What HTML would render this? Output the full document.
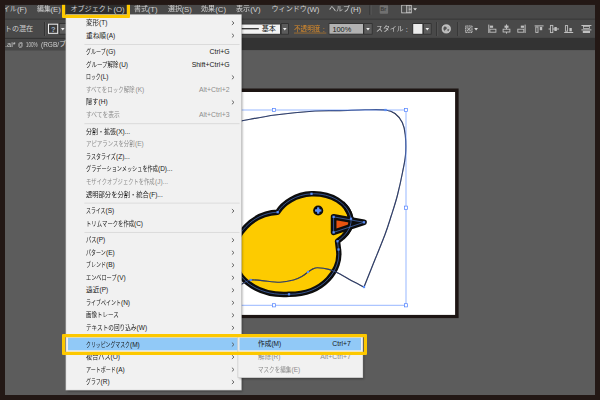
<!DOCTYPE html>
<html lang="ja"><head><meta charset="utf-8"><title>Illustrator</title>
<style>
html,body{margin:0;padding:0}
body{width:600px;height:400px;overflow:hidden;background:#231815;font-family:"Liberation Sans","Noto Sans CJK JP",sans-serif;position:relative}
.a{position:absolute}
svg{display:block;overflow:visible}
svg.L{position:absolute;left:0;top:0}
.x{position:absolute;white-space:nowrap}
.j{font-family:"Liberation Sans","Noto Sans CJK JP",sans-serif;transform-origin:0 50%}
</style></head><body>
<svg class="L" width="600" height="400" viewBox="0 0 600 400"><defs><clipPath id="hc"><rect x="344" y="196" width="20" height="44"/></clipPath></defs><rect x="5" y="4.8" width="590" height="390.2" fill="#5c5c5c"/><rect x="5" y="4.8" width="590" height="14.2" fill="#494949"/><rect x="5" y="18.7" width="590" height="1.1" fill="#343434"/><rect x="5" y="19.8" width="590" height="17.9" fill="#494949"/><rect x="5" y="37.7" width="590" height="12.4" fill="#333"/><rect x="5" y="38.9" width="150" height="11.4" fill="#484848"/><rect x="65" y="4.5" width="61.8" height="10.2" fill="#2f2f2f"/><rect x="369.5" y="5.3" width="1" height="9.5" fill="#2e2e2e"/><rect x="370.5" y="5.3" width="1" height="9.5" fill="#5a5a5a"/><rect x="379.7" y="5.3" width="8.4" height="8.4" fill="#707070" rx="0.8"/><g transform="translate(401.3 4.7)"><rect x="0.5" y="0.5" width="9.4" height="7.6" fill="#3a3a3a" stroke="#d0d0d0"/><rect x="1" y="1" width="4" height="6.6" fill="#4a4a4a"/><rect x="5" y="0.5" width="1" height="7.6" fill="#d0d0d0"/><rect x="7.4" y="0.5" width="0.8" height="7.6" fill="#d0d0d0"/><rect x="7.4" y="4" width="2.6" height="0.8" fill="#d0d0d0"/></g><path d="M413.2 8.2h3.8l-1.9 2.4z" fill="#d8d8d8"/><rect x="44" y="22" width="1" height="14" fill="#333"/><rect x="45" y="22" width="1" height="14" fill="#565656"/><rect x="48" y="23.7" width="10.2" height="10.1" fill="#f0f0f0"/><rect x="49" y="24.7" width="8.2" height="8.1" fill="#3a3a3a"/><rect x="58.9" y="23.3" width="7.8" height="11.2" fill="#2c2c2c"/><rect x="59.6" y="24" width="6.4" height="9.8" fill="#5b5b5b"/><path d="M61 28h3.6l-1.8 2.4z" fill="#f0f0f0"/><rect x="199.3" y="23.8" width="81.4" height="10.7" fill="#2c2c2c"/><rect x="200" y="24.5" width="80" height="9.3" fill="#f2f2f2"/><rect x="205" y="28.2" width="53.8" height="1.1" fill="#111"/><rect x="280.9" y="23.3" width="7.8" height="11.2" fill="#2c2c2c"/><rect x="281.6" y="24" width="6.4" height="9.8" fill="#5b5b5b"/><path d="M283 28h3.6l-1.8 2.4z" fill="#f0f0f0"/><rect x="294" y="32.7" width="32.3" height="0.7" fill="#b97c2c"/><rect x="328.7" y="23.3" width="35" height="11.1" fill="#2c2c2c"/><rect x="329.4" y="24" width="33.6" height="9.7" fill="#b2b2b2"/><rect x="363.5" y="23.3" width="9" height="11.2" fill="#2c2c2c"/><rect x="364.2" y="24" width="7.6" height="9.8" fill="#5b5b5b"/><path d="M366.2 28h3.6l-1.8 2.4z" fill="#f0f0f0"/><rect x="412.5" y="23.3" width="10.6" height="11.2" fill="#2c2c2c"/><rect x="413.2" y="24" width="9.2" height="9.8" fill="#ebebeb"/><rect x="423.1" y="23.3" width="8.4" height="11.2" fill="#2c2c2c"/><rect x="423.8" y="24" width="7" height="9.8" fill="#5b5b5b"/><path d="M425.5 28h3.6l-1.8 2.4z" fill="#f0f0f0"/><rect x="436.2" y="22" width="1" height="14" fill="#333"/><rect x="437.2" y="22" width="1" height="14" fill="#565656"/><rect x="457.3" y="22" width="1" height="14" fill="#333"/><rect x="458.3" y="22" width="1" height="14" fill="#565656"/><g transform="translate(441.7 24.3)"><circle cx="4.6" cy="4.6" r="4.1" fill="#b8b8b8" stroke="#d6d6d6" stroke-width="0.8"/><path d="M2.2 2.4q1.6-.8 2.6.6t-.6 2.2-1.2 1.8-1.4-2.2z" fill="#555"/><path d="M5.8 4.6l1.8.4-.6 2-1.4-.6z" fill="#666"/></g><g transform="translate(464.6 25)"><rect x="0.9" y="0.9" width="6.6" height="6.6" fill="#6a6a6a" stroke="#cfcfcf" stroke-width="0.8" stroke-dasharray="1.1 0.55"/><path d="M2.4 2.4l3.6 3.6M6 2.4L2.4 6" stroke="#cfcfcf" stroke-width="0.7"/><path d="M9.6 3h3.8l-1.9 2.4z" fill="#d8d8d8"/></g><g transform="translate(486.3 24)" fill="#c0c0c0"><rect x="2" y="0.6" width="1" height="8.4"/><rect x="3.6" y="1.6" width="3.2" height="2.2"/><rect x="3.6" y="5.2" width="6" height="3" fill="none" stroke="#c0c0c0" stroke-width="0.9"/></g><g transform="translate(500.5 24)" fill="#c0c0c0"><rect x="5.5" y="0.4" width="1" height="9.2"/><rect x="4" y="1.6" width="4" height="2.2"/><rect x="2.6" y="5.2" width="6.8" height="2.8" fill="#494949" stroke="#c0c0c0" stroke-width="0.9"/></g><g transform="translate(515.6 24)" fill="#c0c0c0"><rect x="9" y="0.6" width="1" height="8.4"/><rect x="5.2" y="1.6" width="3.2" height="2.2"/><rect x="2.2" y="5.2" width="6" height="3" fill="none" stroke="#c0c0c0" stroke-width="0.9"/></g><g transform="translate(533.2 24)" fill="#c0c0c0"><rect x="1.4" y="1.4" width="9" height="1"/><rect x="2.6" y="3" width="2.2" height="5.4" fill="none" stroke="#c0c0c0" stroke-width="0.9"/><rect x="6.6" y="3" width="2.4" height="3.2"/></g><g transform="translate(547.8 24)" fill="#c0c0c0"><rect x="0.8" y="4.5" width="10.4" height="1"/><rect x="2.6" y="1.4" width="2.4" height="7.2" fill="#494949" stroke="#c0c0c0" stroke-width="0.9"/><rect x="6.6" y="3" width="2.4" height="4"/></g><g transform="translate(562.8 24)" fill="#c0c0c0"><rect x="1.4" y="8" width="9" height="1"/><rect x="2.6" y="1.6" width="2.2" height="5.6" fill="none" stroke="#c0c0c0" stroke-width="0.9"/><rect x="6.6" y="4" width="2.4" height="3.4"/></g><g transform="translate(580.4 24)" fill="#c0c0c0"><rect x="1" y="1" width="10" height="1"/><rect x="1" y="5.4" width="10" height="1"/><rect x="3" y="2.4" width="6" height="2" fill="none" stroke="#c0c0c0" stroke-width="0.8"/><rect x="2.4" y="6.8" width="7.2" height="2.2"/></g><rect x="200" y="88.5" width="258.6" height="229.6" fill="#1d1513"/><rect x="200" y="92" width="255.1" height="222.9" fill="#fff"/><path d="M277.7 212.2C283 203 296 194.5 311.5 193.8C331 193 348 203 351 218.75C352 228 345 236 337.5 241.25L338.5 249.5C341.5 269 324 294.5 289 294.3C264 296 234 284 233.5 253C233.5 236 252 213 277.7 212.2Z" fill="#fdcb00" stroke="#0d0d0d" stroke-width="5.4" stroke-linejoin="round"/><path d="M333.6 216.85L364 222.3L333.6 232.4Z" fill="#e8530f" stroke="#0d0d0d" stroke-width="5.7" stroke-linejoin="round"/><path d="M350 219L364.2 222.4L350 227.4Z" fill="#0d0d0d"/><path d="M277.7 212.2C283 203 296 194.5 311.5 193.8C331 193 348 203 351 218.75C352 228 345 236 337.5 241.25L338.5 249.5C341.5 269 324 294.5 289 294.3C264 296 234 284 233.5 253C233.5 236 252 213 277.7 212.2Z" fill="none" stroke="#0d0d0d" stroke-width="5.4" clip-path="url(#hc)"/><circle cx="318.2" cy="210.5" r="5.05" fill="#0d0d0d"/><circle cx="318.2" cy="210.5" r="2" fill="#5a8ffa"/><rect x="317.1" y="207.3" width="2.2" height="2.2" fill="#5a8ffa"/><rect x="317.1" y="211.5" width="2.2" height="2.2" fill="#5a8ffa"/><rect x="315.0" y="209.4" width="2.2" height="2.2" fill="#5a8ffa"/><rect x="319.2" y="209.4" width="2.2" height="2.2" fill="#5a8ffa"/><path d="M215.0 126.0C219.3 125.2 231.0 122.8 241.0 121.0C251.0 119.2 262.7 116.7 275.0 115.0C287.3 113.3 304.2 111.7 315.0 111.0C325.8 110.3 331.7 110.8 340.0 110.6C348.3 110.4 357.4 109.9 365.0 109.8C372.6 109.7 380.5 109.4 385.5 110.0C390.5 110.6 392.2 111.4 395.0 113.5C397.8 115.6 400.6 118.9 402.3 122.5C404.0 126.1 404.8 129.6 405.3 135.0C405.8 140.4 406.0 148.8 405.5 155.0C405.0 161.2 403.8 165.8 402.5 172.5C401.2 179.2 399.3 187.9 397.5 195.0C395.7 202.1 393.6 208.4 391.5 215.0C389.4 221.6 388.3 225.7 385.0 234.5C381.7 243.3 375.1 259.2 371.6 268.0C368.1 276.8 365.3 283.8 364.0 287.0 M364.0 287.0C361.9 285.9 355.2 282.8 351.2 280.6C347.2 278.4 343.8 275.8 340.0 273.9C336.2 272.0 332.5 270.4 328.8 269.4C325.0 268.4 320.1 267.9 317.5 267.8C314.9 267.7 314.6 268.2 313.0 268.9C311.4 269.6 309.8 270.8 308.0 272.0C306.2 273.2 304.9 274.7 302.5 276.0C300.1 277.3 297.2 279.0 293.5 280.0C289.8 281.0 285.2 282.1 280.0 282.2C274.8 282.3 266.9 281.0 262.0 280.6C257.1 280.2 254.0 279.4 250.7 280.0C247.4 280.6 245.8 281.8 242.0 284.0C238.2 286.2 230.3 291.5 228.0 293.0" fill="none" stroke="#1a1a2a" stroke-width="1.15"/><g fill="none" stroke="#5a8ffa" stroke-width="0.55"><path d="M277.7 212.2C283 203 296 194.5 311.5 193.8C331 193 348 203 351 218.75C352 228 345 236 337.5 241.25L338.5 249.5C341.5 269 324 294.5 289 294.3C264 296 234 284 233.5 253C233.5 236 252 213 277.7 212.2Z"/><path d="M333.6 216.85L364 222.3L333.6 232.4Z"/><path d="M215.0 126.0C219.3 125.2 231.0 122.8 241.0 121.0C251.0 119.2 262.7 116.7 275.0 115.0C287.3 113.3 304.2 111.7 315.0 111.0C325.8 110.3 331.7 110.8 340.0 110.6C348.3 110.4 357.4 109.9 365.0 109.8C372.6 109.7 380.5 109.4 385.5 110.0C390.5 110.6 392.2 111.4 395.0 113.5C397.8 115.6 400.6 118.9 402.3 122.5C404.0 126.1 404.8 129.6 405.3 135.0C405.8 140.4 406.0 148.8 405.5 155.0C405.0 161.2 403.8 165.8 402.5 172.5C401.2 179.2 399.3 187.9 397.5 195.0C395.7 202.1 393.6 208.4 391.5 215.0C389.4 221.6 388.3 225.7 385.0 234.5C381.7 243.3 375.1 259.2 371.6 268.0C368.1 276.8 365.3 283.8 364.0 287.0 M364.0 287.0C361.9 285.9 355.2 282.8 351.2 280.6C347.2 278.4 343.8 275.8 340.0 273.9C336.2 272.0 332.5 270.4 328.8 269.4C325.0 268.4 320.1 267.9 317.5 267.8C314.9 267.7 314.6 268.2 313.0 268.9C311.4 269.6 309.8 270.8 308.0 272.0C306.2 273.2 304.9 274.7 302.5 276.0C300.1 277.3 297.2 279.0 293.5 280.0C289.8 281.0 285.2 282.1 280.0 282.2C274.8 282.3 266.9 281.0 262.0 280.6C257.1 280.2 254.0 279.4 250.7 280.0C247.4 280.6 245.8 281.8 242.0 284.0C238.2 286.2 230.3 291.5 228.0 293.0" opacity="0.65"/><path d="M200 110H406V305.3H200" stroke="#6a98ff" stroke-width="0.7"/></g><rect x="276.57" y="211.07" width="2.25" height="2.25" fill="#5a8ffa"/><rect x="310.38" y="192.68" width="2.25" height="2.25" fill="#5a8ffa"/><rect x="349.88" y="217.62" width="2.25" height="2.25" fill="#5a8ffa"/><rect x="336.38" y="240.12" width="2.25" height="2.25" fill="#5a8ffa"/><rect x="337.38" y="248.38" width="2.25" height="2.25" fill="#5a8ffa"/><rect x="287.88" y="293.18" width="2.25" height="2.25" fill="#5a8ffa"/><rect x="332.48" y="215.72" width="2.25" height="2.25" fill="#5a8ffa"/><rect x="362.88" y="221.18" width="2.25" height="2.25" fill="#5a8ffa"/><rect x="332.48" y="231.28" width="2.25" height="2.25" fill="#5a8ffa"/><rect x="384.38" y="108.88" width="2.25" height="2.25" fill="#5a8ffa"/><rect x="362.88" y="285.88" width="2.25" height="2.25" fill="#5a8ffa"/><rect x="306.88" y="270.88" width="2.25" height="2.25" fill="#5a8ffa"/><rect x="249.57" y="278.88" width="2.25" height="2.25" fill="#5a8ffa"/><rect x="272.4" y="108.4" width="3.2" height="3.2" fill="#fff" stroke="#4f80ff" stroke-width="0.7"/><rect x="404.4" y="108.4" width="3.2" height="3.2" fill="#fff" stroke="#4f80ff" stroke-width="0.7"/><rect x="404.4" y="206.1" width="3.2" height="3.2" fill="#fff" stroke="#4f80ff" stroke-width="0.7"/><rect x="404.4" y="303.7" width="3.2" height="3.2" fill="#fff" stroke="#4f80ff" stroke-width="0.7"/><rect x="272.4" y="303.7" width="3.2" height="3.2" fill="#fff" stroke="#4f80ff" stroke-width="0.7"/></svg>
<div class="x j" style="left:2.70px;top:4px;line-height:11.09px;height:11.09px;font-size:7.1px;color:#d2d2d2;">イル</div><div class="x" style="left:16.90px;top:4px;line-height:11.09px;height:11.09px;font-size:7.8px;color:#d2d2d2;">(F)</div><div class="x j" style="left:36.70px;top:4px;line-height:11.09px;height:11.09px;font-size:7.1px;color:#d2d2d2;transform:scaleX(0.97)">編集</div><div class="x" style="left:50.40px;top:4px;line-height:11.09px;height:11.09px;font-size:7.8px;color:#d2d2d2;">(E)</div><div class="x j" style="left:70.40px;top:4px;line-height:11.09px;height:11.09px;font-size:7.1px;color:#d2d2d2;">オブジェクト</div><div class="x" style="left:113.40px;top:4px;line-height:11.09px;height:11.09px;font-size:7.8px;color:#d2d2d2;">(O)</div><div class="x j" style="left:133.70px;top:4px;line-height:11.09px;height:11.09px;font-size:7.1px;color:#d2d2d2;transform:scaleX(0.98)">書式</div><div class="x" style="left:147.70px;top:4px;line-height:11.09px;height:11.09px;font-size:7.8px;color:#d2d2d2;">(T)</div><div class="x j" style="left:167.50px;top:4px;line-height:11.09px;height:11.09px;font-size:7.1px;color:#d2d2d2;transform:scaleX(0.98)">選択</div><div class="x" style="left:181.50px;top:4px;line-height:11.09px;height:11.09px;font-size:7.8px;color:#d2d2d2;">(S)</div><div class="x j" style="left:201.20px;top:4px;line-height:11.09px;height:11.09px;font-size:7.1px;color:#d2d2d2;transform:scaleX(0.98)">効果</div><div class="x" style="left:215.20px;top:4px;line-height:11.09px;height:11.09px;font-size:7.8px;color:#d2d2d2;">(C)</div><div class="x j" style="left:236.20px;top:4px;line-height:11.09px;height:11.09px;font-size:7.1px;color:#d2d2d2;transform:scaleX(0.98)">表示</div><div class="x" style="left:250.20px;top:4px;line-height:11.09px;height:11.09px;font-size:7.8px;color:#d2d2d2;">(V)</div><div class="x j" style="left:271.50px;top:4px;line-height:11.09px;height:11.09px;font-size:7.1px;color:#d2d2d2;">ウィンドウ</div><div class="x" style="left:306.90px;top:4px;line-height:11.09px;height:11.09px;font-size:7.8px;color:#d2d2d2;">(W)</div><div class="x j" style="left:329.40px;top:4px;line-height:11.09px;height:11.09px;font-size:7.1px;color:#d2d2d2;transform:scaleX(0.98)">ヘルプ</div><div class="x" style="left:350.40px;top:4px;line-height:11.09px;height:11.09px;font-size:7.8px;color:#d2d2d2;">(H)</div><div class="x" style="left:380.60px;top:3px;line-height:13.04px;height:13.04px;font-size:5px;color:#3a3a3a;font-weight:bold">Br</div><div class="x j" style="left:-2.30px;top:24px;line-height:11.30px;height:11.30px;font-size:7.1px;color:#cfcfcf;">ートの混在</div><div class="x" style="left:51.10px;top:24px;line-height:11.30px;height:11.30px;font-size:7.5px;color:#9fb3cc;font-weight:bold">?</div><div class="x j" style="left:261.70px;top:24px;line-height:11.30px;height:11.30px;font-size:7.1px;color:#151515;">基本</div><div class="x j" style="left:294px;top:24px;line-height:11.30px;height:11.30px;font-size:7.1px;color:#dc8c2a;transform:scaleX(0.93)">不透明度</div><div class="x" style="left:320.40px;top:24px;line-height:11.30px;height:11.30px;font-size:7.5px;color:#dc8c2a;">&nbsp;:</div><div class="x" style="left:332.40px;top:24px;line-height:11.37px;height:11.37px;font-size:7.4px;color:#1a1a1a;">100%</div><div class="x j" style="left:376px;top:24px;line-height:11.30px;height:11.30px;font-size:7.1px;color:#cfcfcf;transform:scaleX(0.97)">スタイル</div><div class="x" style="left:403.60px;top:24px;line-height:11.30px;height:11.30px;font-size:7.5px;color:#cfcfcf;">&nbsp;:</div><div class="x" style="left:5.30px;top:39px;line-height:11.65px;height:11.65px;font-size:7px;color:#d0d0d0;transform:scaleX(1.058);transform-origin:0 50%">.ai*</div><div class="x" style="left:18.00px;top:39px;line-height:11.65px;height:11.65px;font-size:7px;color:#d0d0d0;transform:scaleX(0.732);transform-origin:0 50%">@</div><div class="x" style="left:26.40px;top:39px;line-height:11.65px;height:11.65px;font-size:7px;color:#d0d0d0;transform:scaleX(0.648);transform-origin:0 50%">100%</div><div class="x" style="left:40.70px;top:39px;line-height:11.65px;height:11.65px;font-size:7px;color:#d0d0d0;transform:scaleX(0.926);transform-origin:0 50%">(RGB/</div><div class="x j" style="left:58.90px;top:39px;line-height:11.65px;height:11.65px;font-size:7.1px;color:#d0d0d0;">プレビュー</div><svg class="L" width="600" height="400" viewBox="0 0 600 400"><defs><filter id="sh" x="-5%" y="-5%" width="110%" height="110%"><feGaussianBlur stdDeviation="1.3"/></filter></defs><rect x="67.4" y="16.5" width="174.9" height="374.9" fill="#000" opacity="0.35" filter="url(#sh)"/><rect x="65.6" y="14.3" width="176.1" height="376.1" fill="#c6c6c6"/><rect x="66.2" y="14.9" width="174.9" height="374.9" fill="#f1f1f1"/><path d="M231.9 21.16l2.1 1.9l-2.1 1.9" fill="none" stroke="#505050" stroke-width="0.85"/><path d="M231.9 33.68l2.1 1.9l-2.1 1.9" fill="none" stroke="#505050" stroke-width="0.85"/><rect x="84.4" y="44.09" width="155.2" height="0.7" fill="#d2d2d2"/><path d="M231.9 75.44l2.1 1.9l-2.1 1.9" fill="none" stroke="#505050" stroke-width="0.85"/><path d="M231.9 100.48l2.1 1.9l-2.1 1.9" fill="none" stroke="#505050" stroke-width="0.85"/><rect x="84.4" y="123.41" width="155.2" height="0.7" fill="#d2d2d2"/><rect x="84.4" y="202.73" width="155.2" height="0.7" fill="#d2d2d2"/><path d="M231.9 209.04l2.1 1.9l-2.1 1.9" fill="none" stroke="#505050" stroke-width="0.85"/><rect x="84.4" y="231.97" width="155.2" height="0.7" fill="#d2d2d2"/><path d="M231.9 238.28l2.1 1.9l-2.1 1.9" fill="none" stroke="#505050" stroke-width="0.85"/><path d="M231.9 250.8l2.1 1.9l-2.1 1.9" fill="none" stroke="#505050" stroke-width="0.85"/><path d="M231.9 263.32l2.1 1.9l-2.1 1.9" fill="none" stroke="#505050" stroke-width="0.85"/><path d="M231.9 275.84l2.1 1.9l-2.1 1.9" fill="none" stroke="#505050" stroke-width="0.85"/><path d="M231.9 288.36l2.1 1.9l-2.1 1.9" fill="none" stroke="#505050" stroke-width="0.85"/><path d="M231.9 300.88l2.1 1.9l-2.1 1.9" fill="none" stroke="#505050" stroke-width="0.85"/><path d="M231.9 313.4l2.1 1.9l-2.1 1.9" fill="none" stroke="#505050" stroke-width="0.85"/><path d="M231.9 325.92l2.1 1.9l-2.1 1.9" fill="none" stroke="#505050" stroke-width="0.85"/><rect x="84.4" y="336.33" width="155.2" height="0.7" fill="#d2d2d2"/><rect x="68" y="337.7" width="169.6" height="12.6" fill="#91c9f7"/><path d="M231.9 342.64l2.1 1.9l-2.1 1.9" fill="none" stroke="#505050" stroke-width="0.85"/><path d="M231.9 355.16l2.1 1.9l-2.1 1.9" fill="none" stroke="#505050" stroke-width="0.85"/><path d="M231.9 367.68l2.1 1.9l-2.1 1.9" fill="none" stroke="#505050" stroke-width="0.85"/><path d="M231.9 380.2l2.1 1.9l-2.1 1.9" fill="none" stroke="#505050" stroke-width="0.85"/><rect x="239.4" y="337" width="124.3" height="41.9" fill="#000" opacity="0.35" filter="url(#sh)"/><rect x="237.6" y="334.8" width="125.5" height="43.1" fill="#c6c6c6"/><rect x="238.2" y="335.4" width="124.3" height="41.9" fill="#f1f1f1"/><rect x="239.5" y="337.7" width="121.5" height="12.6" fill="#91c9f7"/></svg>
<div class="x j" style="left:86px;top:17px;line-height:12.00px;height:12.00px;font-size:6.7px;color:#171717;transform:scaleX(0.98)">変形</div><div class="x" style="left:99.10px;top:17px;line-height:12.00px;height:12.00px;font-size:6.5px;color:#171717;">(T)</div>
<div class="x j" style="left:86px;top:30px;line-height:12.00px;height:12.00px;font-size:6.7px;color:#171717;">重ね順</div><div class="x" style="left:106.60px;top:30px;line-height:12.00px;height:12.00px;font-size:6.5px;color:#171717;">(A)</div>
<div class="x j" style="left:86px;top:46px;line-height:12.00px;height:12.00px;font-size:6.7px;color:#171717;transform:scaleX(0.75)">グループ</div><div class="x" style="left:106.00px;top:46px;line-height:12.00px;height:12.00px;font-size:6.5px;color:#171717;">(G)</div>
<div class="x" style="right:370.40px;top:46px;line-height:11.72px;height:11.72px;font-size:6.9px;color:#171717;">Ctrl+G</div>
<div class="x j" style="left:86px;top:59px;line-height:12.00px;height:12.00px;font-size:6.7px;color:#171717;transform:scaleX(0.82)">グループ解除</div><div class="x" style="left:119.00px;top:59px;line-height:12.00px;height:12.00px;font-size:6.5px;color:#171717;">(U)</div>
<div class="x" style="right:370.40px;top:59px;line-height:11.72px;height:11.72px;font-size:6.9px;color:#171717;">Shift+Ctrl+G</div>
<div class="x j" style="left:86px;top:71px;line-height:12.00px;height:12.00px;font-size:6.7px;color:#171717;transform:scaleX(0.73)">ロック</div><div class="x" style="left:100.60px;top:71px;line-height:12.00px;height:12.00px;font-size:6.5px;color:#171717;">(L)</div>
<div class="x j" style="left:86px;top:84px;line-height:12.00px;height:12.00px;font-size:6.7px;color:#8d8d8d;transform:scaleX(0.82)">すべてをロック解除</div><div class="x" style="left:135.60px;top:84px;line-height:12.00px;height:12.00px;font-size:6.5px;color:#8d8d8d;">(K)</div>
<div class="x" style="right:370.40px;top:84px;line-height:11.72px;height:11.72px;font-size:6.9px;color:#8d8d8d;">Alt+Ctrl+2</div>
<div class="x j" style="left:86px;top:96px;line-height:12.00px;height:12.00px;font-size:6.7px;color:#171717;transform:scaleX(0.92)">隠す</div><div class="x" style="left:98.60px;top:96px;line-height:12.00px;height:12.00px;font-size:6.5px;color:#171717;">(H)</div>
<div class="x j" style="left:86px;top:109px;line-height:12.00px;height:12.00px;font-size:6.7px;color:#8d8d8d;transform:scaleX(0.86)">すべてを表示</div>
<div class="x" style="right:370.40px;top:109px;line-height:11.72px;height:11.72px;font-size:6.9px;color:#8d8d8d;">Alt+Ctrl+3</div>
<div class="x j" style="left:86px;top:126px;line-height:12.00px;height:12.00px;font-size:6.7px;color:#171717;transform:scaleX(0.895)">分割・拡張</div><div class="x" style="left:116.00px;top:126px;line-height:12.00px;height:12.00px;font-size:6.5px;color:#171717;">(X)...</div>
<div class="x j" style="left:86px;top:138px;line-height:12.00px;height:12.00px;font-size:6.7px;color:#8d8d8d;transform:scaleX(0.81)">アピアランスを分割</div><div class="x" style="left:135.00px;top:138px;line-height:12.00px;height:12.00px;font-size:6.5px;color:#8d8d8d;">(E)</div>
<div class="x j" style="left:86px;top:151px;line-height:12.00px;height:12.00px;font-size:6.7px;color:#171717;transform:scaleX(0.75)">ラスタライズ</div><div class="x" style="left:116.00px;top:151px;line-height:12.00px;height:12.00px;font-size:6.5px;color:#171717;">(Z)...</div>
<div class="x j" style="left:86px;top:163px;line-height:12.00px;height:12.00px;font-size:6.7px;color:#171717;transform:scaleX(0.77)">グラデーションメッシュを作成</div><div class="x" style="left:158.00px;top:163px;line-height:12.00px;height:12.00px;font-size:6.5px;color:#171717;">(D)...</div>
<div class="x j" style="left:86px;top:176px;line-height:12.00px;height:12.00px;font-size:6.7px;color:#8d8d8d;transform:scaleX(0.79)">モザイクオブジェクトを作成</div><div class="x" style="left:155.00px;top:176px;line-height:12.00px;height:12.00px;font-size:6.5px;color:#8d8d8d;">(J)...</div>
<div class="x j" style="left:86px;top:189px;line-height:12.00px;height:12.00px;font-size:6.7px;color:#171717;transform:scaleX(0.94)">透明部分を分割・統合</div><div class="x" style="left:149.00px;top:189px;line-height:12.00px;height:12.00px;font-size:6.5px;color:#171717;">(F)...</div>
<div class="x j" style="left:86px;top:205px;line-height:12.00px;height:12.00px;font-size:6.7px;color:#171717;transform:scaleX(0.73)">スライス</div><div class="x" style="left:105.60px;top:205px;line-height:12.00px;height:12.00px;font-size:6.5px;color:#171717;">(S)</div>
<div class="x j" style="left:86px;top:218px;line-height:12.00px;height:12.00px;font-size:6.7px;color:#171717;transform:scaleX(0.80)">トリムマークを作成</div><div class="x" style="left:134.00px;top:218px;line-height:12.00px;height:12.00px;font-size:6.5px;color:#171717;">(C)</div>
<div class="x j" style="left:86px;top:234px;line-height:12.00px;height:12.00px;font-size:6.7px;color:#171717;transform:scaleX(0.79)">パス</div><div class="x" style="left:96.60px;top:234px;line-height:12.00px;height:12.00px;font-size:6.5px;color:#171717;">(P)</div>
<div class="x j" style="left:86px;top:247px;line-height:12.00px;height:12.00px;font-size:6.7px;color:#171717;transform:scaleX(0.75)">パターン</div><div class="x" style="left:106.00px;top:247px;line-height:12.00px;height:12.00px;font-size:6.5px;color:#171717;">(E)</div>
<div class="x j" style="left:86px;top:259px;line-height:12.00px;height:12.00px;font-size:6.7px;color:#171717;transform:scaleX(0.75)">ブレンド</div><div class="x" style="left:106.00px;top:259px;line-height:12.00px;height:12.00px;font-size:6.5px;color:#171717;">(B)</div>
<div class="x j" style="left:86px;top:272px;line-height:12.00px;height:12.00px;font-size:6.7px;color:#171717;transform:scaleX(0.77)">エンベロープ</div><div class="x" style="left:117.00px;top:272px;line-height:12.00px;height:12.00px;font-size:6.5px;color:#171717;">(V)</div>
<div class="x j" style="left:86px;top:284px;line-height:12.00px;height:12.00px;font-size:6.7px;color:#171717;">遠近</div><div class="x" style="left:99.60px;top:284px;line-height:12.00px;height:12.00px;font-size:6.5px;color:#171717;">(P)</div>
<div class="x j" style="left:86px;top:297px;line-height:12.00px;height:12.00px;font-size:6.7px;color:#171717;transform:scaleX(0.75)">ライブペイント</div><div class="x" style="left:121.00px;top:297px;line-height:12.00px;height:12.00px;font-size:6.5px;color:#171717;">(N)</div>
<div class="x j" style="left:86px;top:309px;line-height:12.00px;height:12.00px;font-size:6.7px;color:#171717;transform:scaleX(0.82)">画像トレース</div>
<div class="x j" style="left:86px;top:322px;line-height:12.00px;height:12.00px;font-size:6.7px;color:#171717;transform:scaleX(0.84)">テキストの回り込み</div><div class="x" style="left:136.60px;top:322px;line-height:12.00px;height:12.00px;font-size:6.5px;color:#171717;">(W)</div>
<div class="x j" style="left:86px;top:339px;line-height:12.00px;height:12.00px;font-size:6.7px;color:#171717;transform:scaleX(0.73)">クリッピングマスク</div><div class="x" style="left:130.00px;top:339px;line-height:12.00px;height:12.00px;font-size:6.5px;color:#171717;">(M)</div>
<div class="x j" style="left:86px;top:351px;line-height:12.00px;height:12.00px;font-size:6.7px;color:#171717;transform:scaleX(0.92)">複合パス</div><div class="x" style="left:110.60px;top:351px;line-height:12.00px;height:12.00px;font-size:6.5px;color:#171717;">(O)</div>
<div class="x j" style="left:86px;top:364px;line-height:12.00px;height:12.00px;font-size:6.7px;color:#171717;transform:scaleX(0.75)">アートボード</div><div class="x" style="left:116.00px;top:364px;line-height:12.00px;height:12.00px;font-size:6.5px;color:#171717;">(A)</div>
<div class="x j" style="left:86px;top:376px;line-height:12.00px;height:12.00px;font-size:6.7px;color:#171717;transform:scaleX(0.73)">グラフ</div><div class="x" style="left:100.60px;top:376px;line-height:12.00px;height:12.00px;font-size:6.5px;color:#171717;">(R)</div>
<div class="x j" style="left:258px;top:338px;line-height:12.00px;height:12.00px;font-size:6.7px;color:#171717;">作成</div><div class="x" style="left:271.40px;top:338px;line-height:12.00px;height:12.00px;font-size:6.5px;color:#171717;">(M)</div>
<div class="x" style="right:249.20px;top:338px;line-height:11.72px;height:11.72px;font-size:6.9px;color:#171717;">Ctrl+7</div>
<div class="x j" style="left:258px;top:351px;line-height:12.00px;height:12.00px;font-size:6.7px;color:#8d8d8d;">解除</div><div class="x" style="left:271.40px;top:351px;line-height:12.00px;height:12.00px;font-size:6.5px;color:#8d8d8d;">(R)</div>
<div class="x" style="right:249.20px;top:351px;line-height:11.72px;height:11.72px;font-size:6.9px;color:#8d8d8d;">Alt+Ctrl+7</div>
<div class="x j" style="left:258px;top:364px;line-height:12.00px;height:12.00px;font-size:6.7px;color:#8d8d8d;transform:scaleX(0.83)">マスクを編集</div><div class="x" style="left:291.50px;top:364px;line-height:12.00px;height:12.00px;font-size:6.5px;color:#8d8d8d;">(E)</div>
<svg class="L" width="600" height="400" viewBox="0 0 600 400"><path fill-rule="evenodd" fill="#fdc800" d="M63 -5H129Q130 -5 130 -4V16.9Q130 17.9 129 17.9H63Q62 17.9 62 16.9V-4Q62 -5 63 -5ZM65.2 -1.8H126.8V14.7H65.2Z"/><path fill-rule="evenodd" fill="#fdc800" d="M63 334H366Q367 334 367 335V353.9Q367 354.9 366 354.9H63Q62 354.9 62 353.9V335Q62 334 63 334ZM65.15 337.15H363.85V351.75H65.15Z"/><rect x="0" y="0" width="600" height="4.8" fill="#231815"/><rect x="0" y="395" width="600" height="5" fill="#231815"/><rect x="0" y="0" width="5" height="400" fill="#231815"/><rect x="595" y="0" width="5" height="400" fill="#231815"/></svg>
</body></html>
